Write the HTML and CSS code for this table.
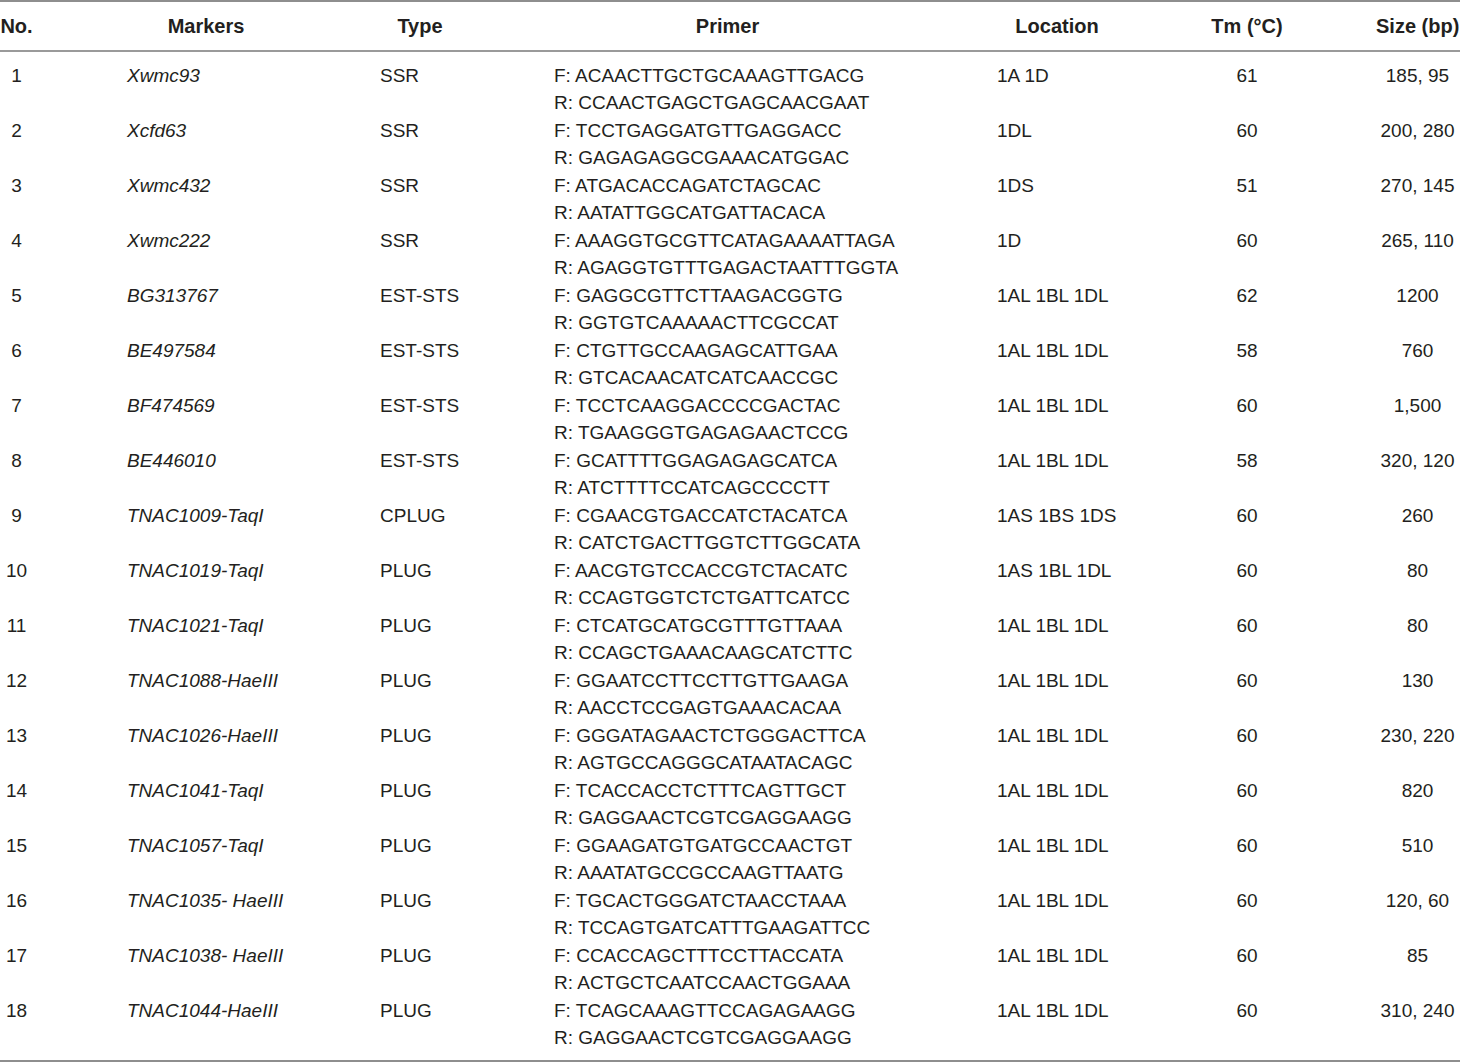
FILE: index.html
```html
<!DOCTYPE html>
<html lang="en">
<head>
<meta charset="utf-8">
<title>Markers table</title>
<link rel="stylesheet" href="styles.css">
</head>
<body>
<table class="markers">
  <colgroup>
    <col class="w-no">
    <col class="w-mk">
    <col class="w-ty">
    <col class="w-pr">
    <col class="w-lo">
    <col class="w-tm">
    <col class="w-sz">
  </colgroup>
  <thead>
    <tr>
      <th class="c-no">No.</th>
      <th class="c-mk">Markers</th>
      <th class="c-ty">Type</th>
      <th class="c-pr">Primer</th>
      <th class="c-lo">Location</th>
      <th class="c-tm">Tm (°C)</th>
      <th class="c-sz">Size (bp)</th>
    </tr>
  </thead>
  <tbody>
    <tr><td class="c-no">1</td><td class="c-mk"><i>Xwmc93</i></td><td class="c-ty">SSR</td><td class="c-pr"><span class="pl">F: ACAACTTGCTGCAAAGTTGACG</span><span class="pl">R: CCAACTGAGCTGAGCAACGAAT</span></td><td class="c-lo">1A 1D</td><td class="c-tm">61</td><td class="c-sz">185, 95</td></tr>
    <tr><td class="c-no">2</td><td class="c-mk"><i>Xcfd63</i></td><td class="c-ty">SSR</td><td class="c-pr"><span class="pl">F: TCCTGAGGATGTTGAGGACC</span><span class="pl">R: GAGAGAGGCGAAACATGGAC</span></td><td class="c-lo">1DL</td><td class="c-tm">60</td><td class="c-sz">200, 280</td></tr>
    <tr><td class="c-no">3</td><td class="c-mk"><i>Xwmc432</i></td><td class="c-ty">SSR</td><td class="c-pr"><span class="pl">F: ATGACACCAGATCTAGCAC</span><span class="pl">R: AATATTGGCATGATTACACA</span></td><td class="c-lo">1DS</td><td class="c-tm">51</td><td class="c-sz">270, 145</td></tr>
    <tr><td class="c-no">4</td><td class="c-mk"><i>Xwmc222</i></td><td class="c-ty">SSR</td><td class="c-pr"><span class="pl">F: AAAGGTGCGTTCATAGAAAATTAGA</span><span class="pl">R: AGAGGTGTTTGAGACTAATTTGGTA</span></td><td class="c-lo">1D</td><td class="c-tm">60</td><td class="c-sz">265, 110</td></tr>
    <tr><td class="c-no">5</td><td class="c-mk"><i>BG313767</i></td><td class="c-ty">EST-STS</td><td class="c-pr"><span class="pl">F: GAGGCGTTCTTAAGACGGTG</span><span class="pl">R: GGTGTCAAAAACTTCGCCAT</span></td><td class="c-lo">1AL 1BL 1DL</td><td class="c-tm">62</td><td class="c-sz">1200</td></tr>
    <tr><td class="c-no">6</td><td class="c-mk"><i>BE497584</i></td><td class="c-ty">EST-STS</td><td class="c-pr"><span class="pl">F: CTGTTGCCAAGAGCATTGAA</span><span class="pl">R: GTCACAACATCATCAACCGC</span></td><td class="c-lo">1AL 1BL 1DL</td><td class="c-tm">58</td><td class="c-sz">760</td></tr>
    <tr><td class="c-no">7</td><td class="c-mk"><i>BF474569</i></td><td class="c-ty">EST-STS</td><td class="c-pr"><span class="pl">F: TCCTCAAGGACCCCGACTAC</span><span class="pl">R: TGAAGGGTGAGAGAACTCCG</span></td><td class="c-lo">1AL 1BL 1DL</td><td class="c-tm">60</td><td class="c-sz">1,500</td></tr>
    <tr><td class="c-no">8</td><td class="c-mk"><i>BE446010</i></td><td class="c-ty">EST-STS</td><td class="c-pr"><span class="pl">F: GCATTTTGGAGAGAGCATCA</span><span class="pl">R: ATCTTTTCCATCAGCCCCTT</span></td><td class="c-lo">1AL 1BL 1DL</td><td class="c-tm">58</td><td class="c-sz">320, 120</td></tr>
    <tr><td class="c-no">9</td><td class="c-mk"><i>TNAC1009-TaqI</i></td><td class="c-ty">CPLUG</td><td class="c-pr"><span class="pl">F: CGAACGTGACCATCTACATCA</span><span class="pl">R: CATCTGACTTGGTCTTGGCATA</span></td><td class="c-lo">1AS 1BS 1DS</td><td class="c-tm">60</td><td class="c-sz">260</td></tr>
    <tr><td class="c-no">10</td><td class="c-mk"><i>TNAC1019-TaqI</i></td><td class="c-ty">PLUG</td><td class="c-pr"><span class="pl">F: AACGTGTCCACCGTCTACATC</span><span class="pl">R: CCAGTGGTCTCTGATTCATCC</span></td><td class="c-lo">1AS 1BL 1DL</td><td class="c-tm">60</td><td class="c-sz">80</td></tr>
    <tr><td class="c-no">11</td><td class="c-mk"><i>TNAC1021-TaqI</i></td><td class="c-ty">PLUG</td><td class="c-pr"><span class="pl">F: CTCATGCATGCGTTTGTTAAA</span><span class="pl">R: CCAGCTGAAACAAGCATCTTC</span></td><td class="c-lo">1AL 1BL 1DL</td><td class="c-tm">60</td><td class="c-sz">80</td></tr>
    <tr><td class="c-no">12</td><td class="c-mk"><i>TNAC1088-HaeIII</i></td><td class="c-ty">PLUG</td><td class="c-pr"><span class="pl">F: GGAATCCTTCCTTGTTGAAGA</span><span class="pl">R: AACCTCCGAGTGAAACACAA</span></td><td class="c-lo">1AL 1BL 1DL</td><td class="c-tm">60</td><td class="c-sz">130</td></tr>
    <tr><td class="c-no">13</td><td class="c-mk"><i>TNAC1026-HaeIII</i></td><td class="c-ty">PLUG</td><td class="c-pr"><span class="pl">F: GGGATAGAACTCTGGGACTTCA</span><span class="pl">R: AGTGCCAGGGCATAATACAGC</span></td><td class="c-lo">1AL 1BL 1DL</td><td class="c-tm">60</td><td class="c-sz">230, 220</td></tr>
    <tr><td class="c-no">14</td><td class="c-mk"><i>TNAC1041-TaqI</i></td><td class="c-ty">PLUG</td><td class="c-pr"><span class="pl">F: TCACCACCTCTTTCAGTTGCT</span><span class="pl">R: GAGGAACTCGTCGAGGAAGG</span></td><td class="c-lo">1AL 1BL 1DL</td><td class="c-tm">60</td><td class="c-sz">820</td></tr>
    <tr><td class="c-no">15</td><td class="c-mk"><i>TNAC1057-TaqI</i></td><td class="c-ty">PLUG</td><td class="c-pr"><span class="pl">F: GGAAGATGTGATGCCAACTGT</span><span class="pl">R: AAATATGCCGCCAAGTTAATG</span></td><td class="c-lo">1AL 1BL 1DL</td><td class="c-tm">60</td><td class="c-sz">510</td></tr>
    <tr><td class="c-no">16</td><td class="c-mk"><i>TNAC1035- HaeIII</i></td><td class="c-ty">PLUG</td><td class="c-pr"><span class="pl">F: TGCACTGGGATCTAACCTAAA</span><span class="pl">R: TCCAGTGATCATTTGAAGATTCC</span></td><td class="c-lo">1AL 1BL 1DL</td><td class="c-tm">60</td><td class="c-sz">120, 60</td></tr>
    <tr><td class="c-no">17</td><td class="c-mk"><i>TNAC1038- HaeIII</i></td><td class="c-ty">PLUG</td><td class="c-pr"><span class="pl">F: CCACCAGCTTTCCTTACCATA</span><span class="pl">R: ACTGCTCAATCCAACTGGAAA</span></td><td class="c-lo">1AL 1BL 1DL</td><td class="c-tm">60</td><td class="c-sz">85</td></tr>
    <tr><td class="c-no">18</td><td class="c-mk"><i>TNAC1044-HaeIII</i></td><td class="c-ty">PLUG</td><td class="c-pr"><span class="pl">F: TCAGCAAAGTTCCAGAGAAGG</span><span class="pl">R: GAGGAACTCGTCGAGGAAGG</span></td><td class="c-lo">1AL 1BL 1DL</td><td class="c-tm">60</td><td class="c-sz">310, 240</td></tr>
  </tbody>
</table>
</body>
</html>
```
FILE: styles.css
```css
html, body {
  margin: 0;
  padding: 0;
  background: #ffffff;
}

body {
  font-family: "Liberation Sans", Arial, sans-serif;
  color: #231f20;
  overflow: hidden;
}

.markers {
  width: 1460px;
  table-layout: fixed;
  border-collapse: separate;
  border-spacing: 0;
}

.w-no { width: 33px; }
.w-mk { width: 346px; }
.w-ty { width: 174px; }
.w-pr { width: 443px; }
.w-lo { width: 184px; }
.w-tm { width: 134px; }
.w-sz { width: 146px; }

.markers th {
  font-size: 20px;
  font-weight: bold;
  line-height: 27px;
  padding-top: 11px;
  padding-bottom: 10px;
  border-top: 2px solid #8e8e8e;
  border-bottom: 2px solid #9a9a9a;
  text-align: center;
  white-space: nowrap;
}

.markers td {
  font-size: 19px;
  line-height: 27px;
  padding-top: 0;
  padding-bottom: 1px;
  vertical-align: top;
  text-align: left;
  white-space: nowrap;
}

.markers tbody tr:first-child td {
  padding-top: 10px;
}

.markers tbody tr:last-child td {
  padding-bottom: 9px;
  border-bottom: 2px solid #8e8e8e;
}

.markers .c-no { text-align: center; padding-left: 0; padding-right: 0; }
.markers .c-mk { padding-left: 94px; }
.markers th.c-mk { padding-right: 94px; }
.markers th.c-ty { padding-right: 93px; }
.markers th.c-pr { padding-right: 95px; }
.markers th.c-lo { padding-right: 63px; }
.markers .c-tm { text-align: center; }
.markers .c-sz { text-align: center; padding-left: 62px; }

.markers td i {
  font-style: italic;
}

.pl {
  display: block;
}
```
